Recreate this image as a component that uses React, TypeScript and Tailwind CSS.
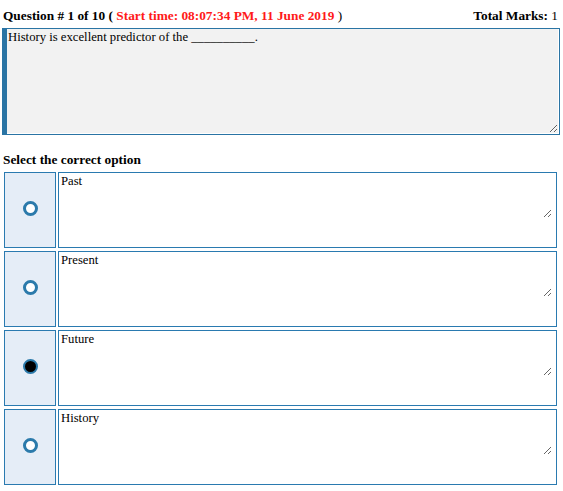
import React, { useState } from 'react';

const OPTIONS = ['Past', 'Present', 'Future', 'History'];

export default function App() {
  const [selected, setSelected] = useState(2);

  return (
    <div className="w-[563px] min-h-[491px] bg-white font-['Liberation_Serif',serif] text-[13.33px] text-black">
      {/* header */}
      <div className="flex justify-between items-end pl-[3px] pr-[5px] pt-[8px] h-[23px] leading-[15px] font-bold">
        <div>
          Question # 1 of 10 ({' '}
          <span className="text-[#ff1a1a]">Start time: 08:07:34 PM, 11 June 2019</span>{' '}
          <span className="font-normal">)</span>
        </div>
        <div>
          Total Marks: <span className="font-normal text-black">1</span>
        </div>
      </div>

      {/* question */}
      <div className="mt-[5px] ml-[2px] mr-[3px] h-[107px] border border-l-[5px] border-[#2a74a4] bg-white">
        <textarea
          readOnly
          className="block w-full h-full resize bg-[#f2f2f2] border-r border-b border-white pl-[1px] pt-[1px] leading-[15px] outline-none font-['Liberation_Serif',serif] text-[12.7px]"
          defaultValue="History is excellent predictor of the __________."
        />
      </div>

      <div className="pl-[3px] pt-[17px] pb-[5px] font-bold leading-[15px]">Select the correct option</div>

      <div className="flex flex-col gap-[3px] pl-[4px] pr-[6px]">
        {OPTIONS.map((opt, i) => {
          const checked = selected === i;
          return (
            <div key={opt} className="flex gap-[2px] h-[76px]">
              <button
                onClick={() => setSelected(i)}
                className="w-[52px] shrink-0 flex items-center justify-center pb-[3px] border border-[#2a7ab0] bg-[#e5edf7]"
              >
                {checked ? (
                  <span className="w-[15px] h-[15px] rounded-full border-[2.5px] border-[#2b7aab] bg-black" />
                ) : (
                  <span className="w-[15px] h-[15px] rounded-full border-[3px] border-[#2b7aab] bg-white" />
                )}
              </button>
              <div className="flex-1 border border-[#2a7ab0] bg-white">
                <textarea
                  readOnly
                  className="block w-[493px] h-[45px] resize bg-white pl-[2px] pt-[1px] leading-[15px] outline-none font-['Liberation_Serif',serif] text-[12.7px]"
                  defaultValue={opt}
                />
              </div>
            </div>
          );
        })}
      </div>
    </div>
  );
}
